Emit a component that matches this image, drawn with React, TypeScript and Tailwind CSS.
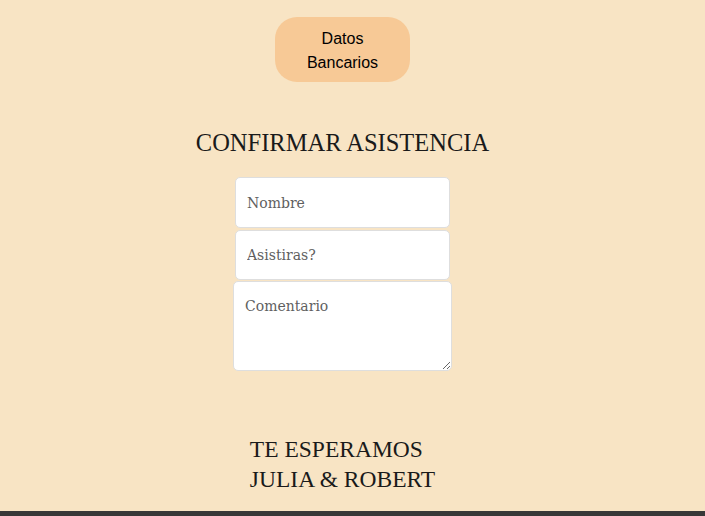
import React from "react";

export default function App() {
  return (
    <div className="w-full bg-[#f8e4c4]">
      <div className="w-[685px] h-[511px] flex flex-col items-center">
        <button className="mt-[17px] w-[135px] h-[65px] pt-[2px] rounded-[22px] bg-[#f7c996] flex items-center justify-center text-[16px] leading-[24px] text-black font-['Liberation_Sans',Arial,sans-serif]">
          Datos
          <br />
          Bancarios
        </button>
        <h2 className="mt-[46px] text-[24.5px] leading-[30px] text-[#1a1a1a] font-['Liberation_Serif',serif] font-normal">
          CONFIRMAR ASISTENCIA
        </h2>
        <form className="mt-[19px] flex flex-col items-center font-['DejaVu_Serif',serif]">
          <input
            type="text"
            placeholder="Nombre"
            className="w-[215px] h-[51px] bg-white border border-[#dedede] rounded-[5px] pl-[11px] text-[14px] placeholder:text-[#5f5f5f] outline-none"
          />
          <input
            type="text"
            placeholder="Asistiras?"
            className="mt-[2px] w-[215px] h-[50px] bg-white border border-[#dedede] rounded-[5px] pl-[11px] text-[14px] placeholder:text-[#5f5f5f] outline-none"
          />
          <textarea
            placeholder="Comentario"
            className="mt-[1px] w-[219px] h-[90px] bg-white border border-[#dedede] rounded-[5px] pl-[11px] pt-[14px] text-[14px] leading-normal placeholder:text-[#5f5f5f] outline-none block"
          />
        </form>
        <div className="mt-[63px] text-left text-[23.5px] leading-[30px] text-[#1a1a1a] font-['Liberation_Serif',serif]">
          <div>TE ESPERAMOS</div>
          <div>JULIA &amp; ROBERT</div>
        </div>
      </div>
      <div className="h-[5px] bg-[#383838]" />
    </div>
  );
}
